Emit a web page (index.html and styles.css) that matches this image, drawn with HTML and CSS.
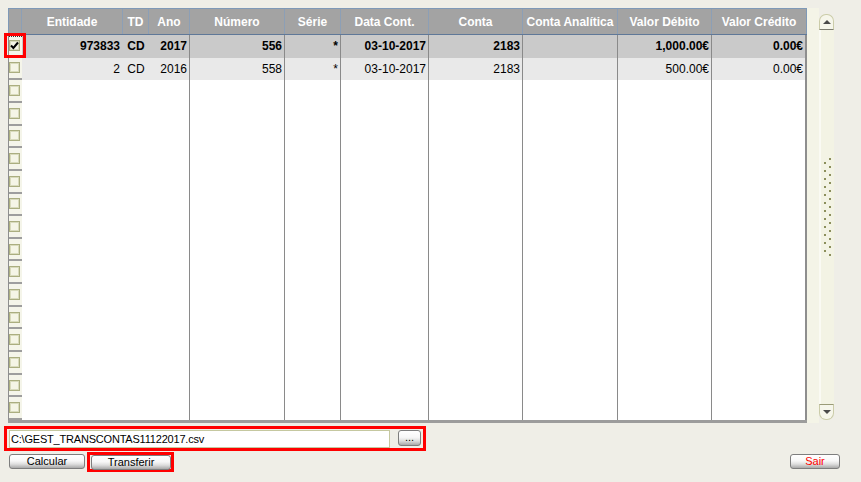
FILE: index.html
```html
<!DOCTYPE html>
<html>
<head>
<meta charset="utf-8">
<link rel="stylesheet" href="styles.css">
</head>
<body>
<div class="screen">
  <div class="top">
    <div class="grid">
      <div class="head">
        <div class="hc w-rh"></div>
        <div class="hc w-ent">Entidade</div>
        <div class="hc w-td">TD</div>
        <div class="hc w-ano">Ano</div>
        <div class="hc w-num">Número</div>
        <div class="hc w-ser">Série</div>
        <div class="hc w-dat">Data Cont.</div>
        <div class="hc w-con">Conta</div>
        <div class="hc w-ca">Conta Analítica</div>
        <div class="hc w-vd">Valor Débito</div>
        <div class="hc w-vc">Valor Crédito</div>
      </div>
      <div class="body">
        <div class="rhcol">
          <div class="rh focus"><span class="cb"><svg width="9" height="9" viewBox="0 0 9 9"><path d="M1 4.5 L3.4 7 L8 1.5" fill="none" stroke="#000" stroke-width="2"/></svg></span><span class="mark"></span></div>
          <div class="rh"><span class="cb"></span></div>
          <div class="rh"><span class="cb"></span></div>
          <div class="rh"><span class="cb"></span></div>
          <div class="rh"><span class="cb"></span></div>
          <div class="rh"><span class="cb"></span></div>
          <div class="rh"><span class="cb"></span></div>
          <div class="rh"><span class="cb"></span></div>
          <div class="rh"><span class="cb"></span></div>
          <div class="rh"><span class="cb"></span></div>
          <div class="rh"><span class="cb"></span></div>
          <div class="rh"><span class="cb"></span></div>
          <div class="rh"><span class="cb"></span></div>
          <div class="rh"><span class="cb"></span></div>
          <div class="rh"><span class="cb"></span></div>
          <div class="rh"><span class="cb"></span></div>
          <div class="rh"><span class="cb"></span></div>
        </div>
        <div class="col w-ent"><div class="cell sel">973833</div><div class="cell alt">2</div></div>
        <div class="col w-td"><div class="cell sel ctr">CD</div><div class="cell alt ctr">CD</div></div>
        <div class="col w-ano line"><div class="cell sel">2017</div><div class="cell alt">2016</div></div>
        <div class="col w-num line"><div class="cell sel">556</div><div class="cell alt">558</div></div>
        <div class="col w-ser line"><div class="cell sel">*</div><div class="cell alt">*</div></div>
        <div class="col w-dat line"><div class="cell sel">03-10-2017</div><div class="cell alt">03-10-2017</div></div>
        <div class="col w-con line"><div class="cell sel">2183</div><div class="cell alt">2183</div></div>
        <div class="col w-ca line"><div class="cell sel"></div><div class="cell alt"></div></div>
        <div class="col w-vd line"><div class="cell sel">1,000.00€</div><div class="cell alt">500.00€</div></div>
        <div class="col w-vc line2"><div class="cell sel">0.00€</div><div class="cell alt">0.00€</div></div>
      </div>
    </div>
    <div class="strip"></div>
    <div class="sb">
      <div class="sbtn up"><span class="tri-up"></span></div>
      <div class="track"><div class="grip"></div></div>
      <div class="sbtn down"><span class="tri-down"></span></div>
    </div>
  </div>
  <div class="pathbox">
    <div class="path">C:\GEST_TRANSCONTAS11122017.csv</div>
    <div class="btn dots">...</div>
  </div>
  <div class="btnrow">
    <div class="btn b-calc">Calcular</div>
    <div class="redwrap"><div class="btn b-trans">Transferir</div></div>
    <div class="btn b-sair">Sair</div>
  </div>
</div>
</body>
</html>
```

FILE: styles.css
```css
* { box-sizing: border-box; }
html, body { margin: 0; padding: 0; }
body {
  background: #efeee7;
  font-family: "Liberation Sans", Arial, sans-serif;
  width: 861px;
  height: 482px;
  overflow: hidden;
}
.screen { display: flex; flex-direction: column; }
.top { display: flex; margin: 8px 0 0 8px; }
.grid { width: 799px; display: flex; flex-direction: column; }
.head {
  display: flex;
  height: 27px;
  background: #a3a3a3;
  border-top: 1px solid #7f99b7;
  border-left: 1px solid #7f99b7;
  border-bottom: 1px solid #5f7898;
}
.hc {
  color: #fff;
  font-weight: bold;
  font-size: 12px;
  display: flex;
  align-items: center;
  justify-content: center;
  border-right: 1px solid #8c9fb6;
  white-space: nowrap;
}
.w-rh { width: 13px; }
.w-ent { width: 101px; }
.w-td { width: 26px; }
.w-ano { width: 41px; }
.w-num { width: 95px; }
.w-ser { width: 56px; }
.w-dat { width: 88px; }
.w-con { width: 94px; }
.w-ca { width: 95px; }
.w-vd { width: 94px; }
.w-vc { width: 95px; }
.hc.w-vc { border-right: 1px solid #7f99b7; }

.body {
  display: flex;
  height: 388px;
  border-bottom: 3px solid #9c9c9c;
  background: #fff;
}
.rhcol {
  width: 14px;
  border-left: 1px solid #8e8e8e;
  background: #f5f5ea;
  display: grid;
  grid-template-rows: repeat(17, 1fr);
}
.rh {
  position: relative;
  border-bottom: 2px solid #9e9e9e;
  display: flex;
  align-items: center;
}
.rh.focus {
  background-image: linear-gradient(to right, #333 50%, transparent 50%);
  background-size: 2px 1px;
  background-repeat: repeat-x;
  background-position: 0 1px;
}
.cb {
  width: 11px;
  height: 11px;
  border: 1px solid #abae80;
  box-shadow: inset 0 0 0 1px #d9dbbd;
  background: #f5f5e6;
  display: flex;
  align-items: center;
  justify-content: center;
}
.cb svg { display: block; }
.mark {
  position: absolute;
  left: -5px;
  top: -2px;
  width: 22px;
  height: 25px;
  border: 3px solid #ff0000;
}
.col { display: flex; flex-direction: column; }
.col.line { border-right: 1px solid #8a8a8a; }
.col.line2 { border-right: 2px solid #8e8e8e; }
.cell {
  height: 22.647px;
  font-size: 12px;
  color: #000;
  display: flex;
  align-items: center;
  justify-content: flex-end;
  padding-right: 2px;
  white-space: nowrap;
}
.cell.ctr { justify-content: center; padding-right: 0; }
.cell.sel { background: #cacaca; font-weight: bold; }
.cell.alt { background: #e9e9e9; }
.w-ent .cell { padding-right: 3px; }

.strip { width: 12px; height: 415px; background: #f4f4e7; }
.sb {
  width: 15px;
  height: 406px;
  margin-top: 6px;
  display: flex;
  flex-direction: column;
}
.sbtn {
  height: 16px;
  background: #f6f6eb;
  border: 1px solid #cbcca9;
  display: flex;
  align-items: center;
  justify-content: center;
}
.sbtn.up { border-radius: 7px 7px 0 0; border-bottom: 1px solid #7c7c70; }
.sbtn.down { border-radius: 0 0 7px 7px; border-top: 1px solid #9a9b78; }
.tri-up {
  width: 0; height: 0;
  border-left: 4px solid transparent;
  border-right: 4px solid transparent;
  border-bottom: 4px solid #4a4a4a;
}
.tri-down {
  width: 0; height: 0;
  border-left: 4px solid transparent;
  border-right: 4px solid transparent;
  border-top: 4px solid #4a4a4a;
}
.track {
  flex: 1;
  background: #f3f3e4;
  border-left: 2px solid #fafaf3;
  display: flex;
  justify-content: center;
  padding-top: 128px;
}
.grip {
  width: 8px;
  height: 98px;
  background-image:
    radial-gradient(circle at 1px 1px, #8c8f5c 0.9px, transparent 1.1px),
    radial-gradient(circle at 1px 1px, #8c8f5c 0.9px, transparent 1.1px);
  background-size: 8px 8px, 8px 8px;
  background-position: 0 4px, 5px 0;
  background-repeat: repeat-y;
}

.pathbox {
  margin: 3px 0 0 4px;
  width: 422px;
  height: 25px;
  border: 3px solid #ff0000;
  padding: 1px 2px 0 2px;
  display: flex;
  align-items: flex-start;
  gap: 8px;
}
.path {
  width: 381px;
  height: 18px;
  background: #fff;
  border: 1px solid #c5c8a0;
  font-size: 11px;
  color: #000;
  padding-left: 1px;
  display: flex;
  align-items: center;
  white-space: nowrap;
  letter-spacing: -0.2px;
}
.btn {
  height: 15px;
  border: 1px solid #7e7e7e;
  border-radius: 3px;
  background: linear-gradient(#ffffff 0%, #f7f7f7 45%, #dedede 70%, #a9a9a9 100%);
  font-size: 11px;
  color: #000;
  display: flex;
  align-items: center;
  justify-content: center;
  white-space: nowrap;
  line-height: 1;
}
.btn.dots { width: 23px; height: 16px; align-items: flex-end; padding-bottom: 2px; }
.btnrow {
  display: flex;
  align-items: flex-start;
  margin-top: 1px;
  padding: 0 21px 0 9px;
}
.b-calc { width: 76px; margin-top: 2px; }
.redwrap {
  margin-left: 2px;
  border: 3px solid #ff0000;
  padding: 0 0 0 1px;
  height: 20px;
  display: flex;
  align-items: center;
}
.b-trans { width: 80px; }
.b-sair { width: 50px; margin-left: auto; margin-top: 2px; color: #ff0000; }
```
